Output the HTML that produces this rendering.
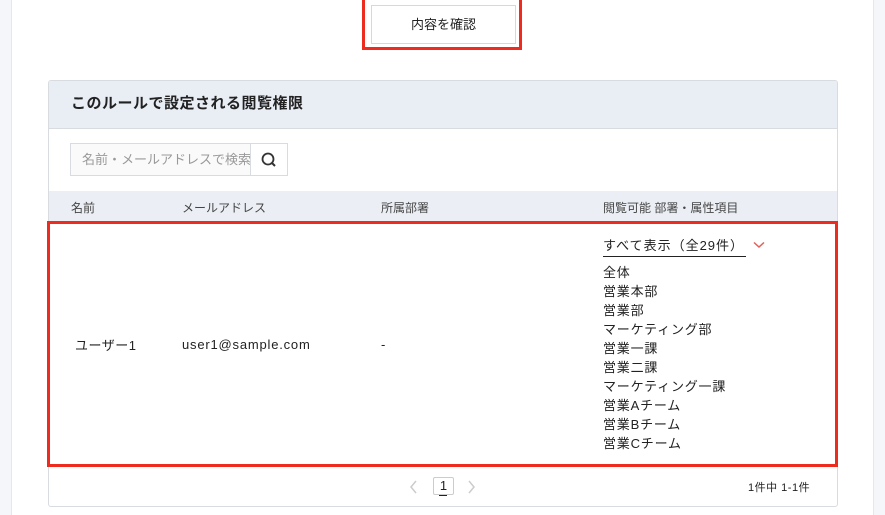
<!DOCTYPE html>
<html><head><meta charset="utf-8"><style>
*{box-sizing:border-box;margin:0;padding:0}
body{width:885px;height:515px;overflow:hidden;background:#f4f6fa;font-family:"Liberation Sans","Noto Sans CJK JP",sans-serif;color:#222;position:relative}
.panel{position:absolute;left:11px;top:0;width:863px;height:515px;background:#fff;border-left:1px solid #e4e7ec;border-right:1px solid #e4e7ec}
.abs{position:absolute}
.redbox{border:3px solid #ee2b1f}
.btn{left:371px;top:5px;width:145px;height:39px;border:1px solid #d5d8dc;background:#fff;font-size:13px;text-align:center;line-height:37px}
.card{left:48px;top:80px;width:790px;height:427px;border:1px solid #d8dbe0;border-radius:3px;background:#fff;overflow:hidden}
.chead{left:0;top:0;width:100%;height:48px;background:#e9eef5;border-bottom:1px solid #d8dbe0;font-weight:bold;font-size:15px;padding-left:22px;line-height:46px;color:#222;letter-spacing:0.5px}
.search{left:21px;top:62px;width:181px;height:33px;border:1px solid #d8dbe0;background:#fafafa;font-size:13px;color:#999;padding-left:11px;line-height:31px;white-space:nowrap;overflow:hidden}
.sbtn{left:201px;top:62px;width:38px;height:33px;border:1px solid #d8dbe0;background:#fff}
.thead{left:0;top:110px;width:100%;height:31px;background:#ebeff5;font-size:12px;color:#444}
.thead span{position:absolute;top:8px}
.t{font-size:13px;color:#222;position:absolute;letter-spacing:0.5px}
.list div{height:19px;line-height:19px;font-size:13px;letter-spacing:0.8px}
</style></head><body>
<div class="panel"></div>
<div class="abs redbox" style="left:362px;top:-3px;width:160px;height:53px"></div>
<div class="abs btn">内容を確認</div>
<div class="abs card">
 <div class="abs chead">このルールで設定される閲覧権限</div>
 <div class="abs search">名前・メールアドレスで検索</div>
 <div class="abs sbtn"><svg width="38" height="33" viewBox="0 0 38 33"><circle cx="17" cy="15" r="5.5" fill="none" stroke="#333" stroke-width="1.8"/><line x1="21" y1="19" x2="24" y2="22" stroke="#333" stroke-width="2"/></svg></div>
 <div class="abs thead"><span style="left:22px">名前</span><span style="left:133px">メールアドレス</span><span style="left:332px">所属部署</span><span style="left:554px">閲覧可能 部署・属性項目</span></div>
 <div class="t" style="left:26px;top:254px">ユーザー1</div>
 <div class="t" style="left:133px;top:256px;letter-spacing:0.8px">user1@sample.com</div>
 <div class="t" style="left:332px;top:256px">-</div>
 <div class="t" style="left:554px;top:154px;border-bottom:1px solid #222;padding-bottom:2px;width:143px;letter-spacing:1px">すべて表示（全29件）</div>
 <svg class="abs" style="left:704px;top:160px" width="12" height="8" viewBox="0 0 12 8"><path d="M1 1.5 L6 6 L11 1.5" fill="none" stroke="#e0605a" stroke-width="1.5"/></svg>
 <div class="abs list" style="left:554px;top:182px">
  <div>全体</div><div>営業本部</div><div>営業部</div><div>マーケティング部</div><div>営業一課</div><div>営業二課</div><div>マーケティング一課</div><div>営業Aチーム</div><div>営業Bチーム</div><div>営業Cチーム</div>
 </div>
 <div class="abs" style="left:0;top:385px;width:100%;border-top:1px solid #e4e7ec"></div>
 <svg class="abs" style="left:360px;top:399px" width="10" height="14" viewBox="0 0 10 14"><path d="M7 1 L2 7 L7 13" fill="none" stroke="#ccc" stroke-width="1.5"/></svg>
 <div class="abs" style="left:384px;top:396px;width:21px;height:18px;border:1px solid #ccc;border-radius:2px;font-size:13px;text-align:center;line-height:16px">1</div>
 <div class="abs" style="left:390px;top:414px;width:8px;border-top:1px solid #222"></div>
 <svg class="abs" style="left:417px;top:399px" width="10" height="14" viewBox="0 0 10 14"><path d="M3 1 L8 7 L3 13" fill="none" stroke="#ccc" stroke-width="1.5"/></svg>
 <div class="abs" style="left:699px;top:398px;font-size:11px;letter-spacing:0.5px">1件中 1-1件</div>
</div>
<div class="abs redbox" style="left:47px;top:221px;width:791px;height:246px"></div>
</body></html>
